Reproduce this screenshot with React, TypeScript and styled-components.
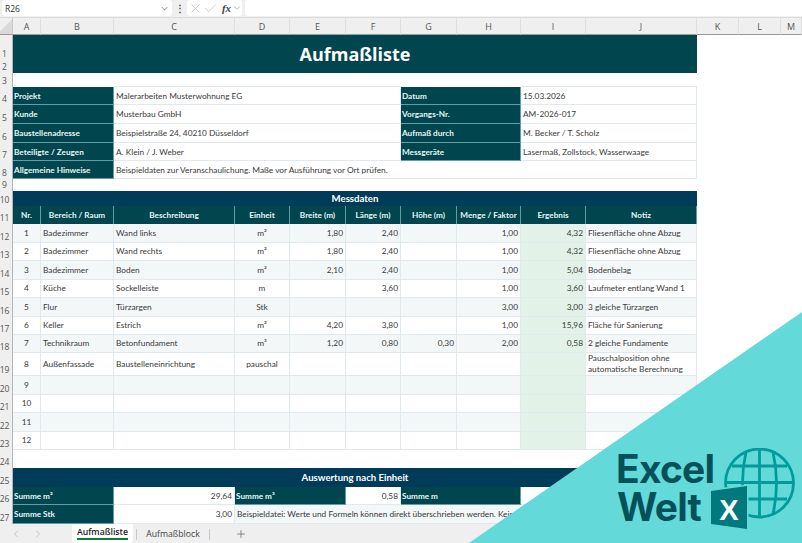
import styled, { createGlobalStyle } from 'styled-components';
import { ChevronDown, ChevronLeft, ChevronRight, Check, X, Plus } from 'lucide-react';

const GlobalStyle = createGlobalStyle`
    html, body {
        margin: 0;
        padding: 0;
        background: #fff;
    }
    body {
        font-family: "Open Sans", "Liberation Sans", sans-serif;
    }
`;

const COLUMN_LETTERS = ['A', 'B', 'C', 'D', 'E', 'F', 'G', 'H', 'I', 'J', 'K', 'L', 'M'];
const ROW_NUMBERS = Array.from({ length: 27 }, (_, i) => i + 1);

type PlaceProps = {
    $row: number;
    $col: number;
    $span?: number;
    $rows?: number;
};

// grid lines: line 1 is the row header column, column A starts on line 2
const place = (p: PlaceProps) => `
    grid-row: ${p.$row + 1} / span ${p.$rows || 1};
    grid-column: ${p.$col + 1} / span ${p.$span || 1};
`;

type MeasureRow = {
    nr: string;
    area?: string;
    desc?: string;
    unit?: string;
    w?: string;
    l?: string;
    h?: string;
    qty?: string;
    result?: string;
    note?: string;
};

const measures: MeasureRow[] = [
    { nr: '1', area: 'Badezimmer', desc: 'Wand links', unit: 'm²', w: '1,80', l: '2,40', qty: '1,00', result: '4,32', note: 'Fliesenfläche ohne Abzug' },
    { nr: '2', area: 'Badezimmer', desc: 'Wand rechts', unit: 'm²', w: '1,80', l: '2,40', qty: '1,00', result: '4,32', note: 'Fliesenfläche ohne Abzug' },
    { nr: '3', area: 'Badezimmer', desc: 'Boden', unit: 'm²', w: '2,10', l: '2,40', qty: '1,00', result: '5,04', note: 'Bodenbelag' },
    { nr: '4', area: 'Küche', desc: 'Sockelleiste', unit: 'm', l: '3,60', qty: '1,00', result: '3,60', note: 'Laufmeter entlang Wand 1' },
    { nr: '5', area: 'Flur', desc: 'Türzargen', unit: 'Stk', qty: '3,00', result: '3,00', note: '3 gleiche Türzargen' },
    { nr: '6', area: 'Keller', desc: 'Estrich', unit: 'm²', w: '4,20', l: '3,80', qty: '1,00', result: '15,96', note: 'Fläche für Sanierung' },
    { nr: '7', area: 'Technikraum', desc: 'Betonfundament', unit: 'm³', w: '1,20', l: '0,80', h: '0,30', qty: '2,00', result: '0,58', note: '2 gleiche Fundamente' },
    { nr: '8', area: 'Außenfassade', desc: 'Baustelleneinrichtung', unit: 'pauschal', note: 'Pauschalposition ohne automatische Berechnung' },
    { nr: '9' },
    { nr: '10' },
    { nr: '11' },
    { nr: '12' },
];

const headers = ['Nr.', 'Bereich / Raum', 'Beschreibung', 'Einheit', 'Breite (m)', 'Länge (m)', 'Höhe (m)', 'Menge / Faktor', 'Ergebnis', 'Notiz'];

const infoRows = [
    { row: 4, label: 'Projekt', value: 'Malerarbeiten Musterwohnung EG', label2: 'Datum', value2: '15.03.2026' },
    { row: 5, label: 'Kunde', value: 'Musterbau GmbH', label2: 'Vorgangs-Nr.', value2: 'AM-2026-017' },
    { row: 6, label: 'Baustellenadresse', value: 'Beispielstraße 24, 40210 Düsseldorf', label2: 'Aufmaß durch', value2: 'M. Becker / T. Scholz' },
    { row: 7, label: 'Beteiligte / Zeugen', value: 'A. Klein / J. Weber', label2: 'Messgeräte', value2: 'Lasermaß, Zollstock, Wasserwaage' },
];

function App() {
    return (
        <Page>
            <GlobalStyle />
            <FormulaBar>
                <NameBox>
                    R26
                    <ChevronDown size={11} strokeWidth={1.4} color="#555" />
                </NameBox>
                <Dots>⋮</Dots>
                <FxGroup>
                    <X size={15} strokeWidth={1} color="#b5b5b5" />
                    <Check size={15} strokeWidth={1} color="#b5b5b5" />
                    <FxLabel>fx</FxLabel>
                    <ChevronDown size={10} strokeWidth={1.2} color="#777" />
                </FxGroup>
                <FormulaInput />
            </FormulaBar>

            <Sheet>
                <Corner />
                {COLUMN_LETTERS.map((letter, i) => (
                    <ColHead key={letter} $col={i + 1}>{letter}</ColHead>
                ))}
                {ROW_NUMBERS.map((n) => (
                    <RowHead key={n} $row={n}>{n}</RowHead>
                ))}

                <Title $row={1} $rows={2} $col={1} $span={10}>Aufmaßliste</Title>

                {infoRows.map((r) => (
                    <InfoGroup key={r.row} {...r} />
                ))}
                <Label $row={8} $col={1} $span={2}>Allgemeine Hinweise</Label>
                <Value $row={8} $col={3} $span={8}>
                    Beispieldaten zur Veranschaulichung. Maße vor Ausführung vor Ort prüfen.
                </Value>

                <Band $row={10} $col={1} $span={10}>Messdaten</Band>
                {headers.map((h, i) => (
                    <Th key={h} $row={11} $col={i + 1}>{h}</Th>
                ))}
                {measures.map((m, i) => (
                    <MeasureLine key={m.nr} item={m} row={12 + i} />
                ))}

                <Band $row={25} $col={1} $span={10}>Auswertung nach Einheit</Band>
                <Label $row={26} $col={1} $span={2}>Summe m²</Label>
                <Value $row={26} $col={3} $right>29,64</Value>
                <Label $row={26} $col={4} $span={2}>Summe m³</Label>
                <Value $row={26} $col={6} $right>0,58</Value>
                <Label $row={26} $col={7} $span={2}>Summe m</Label>
                <Value $row={26} $col={9} $span={2} $right>3,60</Value>
                <Label $row={27} $col={1} $span={2}>Summe Stk</Label>
                <Value $row={27} $col={3} $right>3,00</Value>
                <Value $row={27} $col={4} $span={7} $tint>
                    Beispieldatei: Werte und Formeln können direkt überschrieben werden. Keine Gewähr.
                </Value>
            </Sheet>

            <TabBar>
                <TabNav>
                    <ChevronLeft size={12} strokeWidth={1.3} color="#a8a8a8" />
                    <ChevronRight size={12} strokeWidth={1.3} color="#a8a8a8" />
                </TabNav>
                <ActiveTab>
                    <ActiveTabText>Aufmaßliste</ActiveTabText>
                </ActiveTab>
                <Tab>Aufmaßblock</Tab>
                <Plus size={12} strokeWidth={1.4} color="#666" />
            </TabBar>

            <Wedge />
            <Logo>
                <LogoWord>Excel</LogoWord>
                <LogoWord $indent>Welt</LogoWord>
                <LogoMark viewBox="0 0 90 90" aria-hidden="true">
                    <g fill="none" stroke="#009b9b" strokeWidth="2.8">
                        <circle cx="48.5" cy="35" r="34" />
                        <path d="M35 4 Q28 35 35 66" />
                        <path d="M62 4 Q69 35 62 66" />
                        <line x1="48.5" y1="1" x2="48.5" y2="69" />
                        <line x1="21" y1="18" x2="76" y2="18" />
                        <line x1="14.5" y1="34.5" x2="82.5" y2="34.5" />
                        <line x1="21" y1="51" x2="76" y2="51" />
                    </g>
                    <path d="M0 43 L36 38 L36 81 L0 76 Z" fill="#00787c" stroke="#64d9da" strokeWidth="3" paintOrder="stroke" />
                    <LogoX x="18" y="71.5" textAnchor="middle">X</LogoX>
                </LogoMark>
            </Logo>
        </Page>
    );
}

export default App;

type InfoProps = {
    row: number;
    label: string;
    value: string;
    label2: string;
    value2: string;
};

function InfoGroup({ row, label, value, label2, value2 }: InfoProps) {
    const top = row === 4;
    return (
        <>
            <Label $row={row} $col={1} $span={2}>{label}</Label>
            <Value $row={row} $col={3} $span={4} $top={top}>{value}</Value>
            <Label $row={row} $col={7} $span={2}>{label2}</Label>
            <Value $row={row} $col={9} $span={2} $top={top}>{value2}</Value>
        </>
    );
}

type LineProps = {
    item: MeasureRow;
    row: number;
};

function MeasureLine({ item, row }: LineProps) {
    const alt = row % 2 === 0;
    return (
        <>
            <Td $row={row} $col={1} $alt={alt} $align="center">{item.nr}</Td>
            <Td $row={row} $col={2} $alt={alt}>{item.area}</Td>
            <Td $row={row} $col={3} $alt={alt}>{item.desc}</Td>
            <Td $row={row} $col={4} $alt={alt} $align="center">{item.unit}</Td>
            <Td $row={row} $col={5} $alt={alt} $align="right">{item.w}</Td>
            <Td $row={row} $col={6} $alt={alt} $align="right">{item.l}</Td>
            <Td $row={row} $col={7} $alt={alt} $align="right">{item.h}</Td>
            <Td $row={row} $col={8} $alt={alt} $align="right">{item.qty}</Td>
            <ResultTd $row={row} $col={9}>{item.result}</ResultTd>
            <Td $row={row} $col={10} $alt={alt}>{item.note}</Td>
        </>
    );
}

const Page = styled.div`
    position: relative;
    display: flex;
    flex-direction: column;
    width: 802px;
    height: 543px;
    overflow: hidden;
    background: #fff;
`;

const FormulaBar = styled.div`
    display: flex;
    align-items: center;
    gap: 3px;
    height: 18px;
    padding: 0 0 1px 2px;
    box-sizing: border-box;
    background: #efefef;
    border-bottom: 1px solid #dcdcdc;
`;

const NameBox = styled.div`
    display: flex;
    align-items: center;
    justify-content: space-between;
    width: 170px;
    height: 16px;
    padding: 0 2px 0 3px;
    box-sizing: border-box;
    background: #fff;
    border-radius: 3px;
    font-size: 8.5px;
    color: #333;
`;

const Dots = styled.div`
    width: 9px;
    text-align: center;
    font-size: 10px;
    font-weight: 700;
    color: #555;
`;

const FxGroup = styled.div`
    display: flex;
    align-items: center;
    width: 55px;
    height: 16px;
    padding-left: 1px;
    box-sizing: border-box;
    background: #fff;
    border-radius: 3px;
`;

const FxLabel = styled.span`
    margin: 0 1px 0 4px;
    font-family: "Liberation Serif", serif;
    font-style: italic;
    font-weight: 700;
    font-size: 11px;
    color: #444;
`;

const FormulaInput = styled.div`
    flex: 1;
    height: 16px;
    background: #fff;
    border-radius: 3px 0 0 3px;
`;

const Sheet = styled.div`
    display: grid;
    grid-template-columns: 13px 28px 73px 121px 55px 56px 55px 56px 64px 65px 111px 42px 42px 21px;
    grid-template-rows: 17px 25px 13px 14px 18px 19px 19px 18px 18px 12px 15px 18px 19px 18px 19px 18px 19px 18px 18px 23px 19px 18px 19px 18px 18px 19px 18px 19px;
    font-size: 8px;
    color: #3a3a3a;
`;

const Corner = styled.div`
    grid-row: 1;
    grid-column: 1;
    background: linear-gradient(135deg, #efefef 50%, #d9d9d9 50%);
    border-bottom: 1px solid #9a9a9a;
    border-right: 1px solid #c8c8c8;
    box-sizing: border-box;
`;

const ColHead = styled.div<{ $col: number }>`
    grid-row: 1;
    grid-column: ${(p) => p.$col + 1};
    display: flex;
    align-items: center;
    justify-content: center;
    background: #efefef;
    border-bottom: 1px solid #9a9a9a;
    border-right: 1px solid #dedede;
    box-sizing: border-box;
    font-size: 9px;
    color: #555;
`;

const RowHead = styled.div<{ $row: number }>`
    grid-row: ${(p) => p.$row + 1};
    grid-column: 1;
    display: flex;
    align-items: flex-end;
    justify-content: center;
    padding-right: 3px;
    background: #efefef;
    border-right: 1px solid #b5b5b5;
    box-sizing: border-box;
    font-size: 8.5px;
    line-height: 13px;
    color: #555;
`;

const Title = styled.div<PlaceProps>`
    ${place}
    display: flex;
    align-items: center;
    justify-content: center;
    background: #01464e;
    font-size: 18px;
    font-weight: 700;
    color: #fff;
`;

const Band = styled.div<PlaceProps>`
    ${place}
    display: flex;
    align-items: center;
    justify-content: center;
    background: #003c59;
    font-family: Lato, "Open Sans", sans-serif;
    font-size: 9.6px;
    font-weight: 700;
    color: #fff;
`;

const Label = styled.div<PlaceProps>`
    ${place}
    display: flex;
    align-items: center;
    padding-left: 1px;
    background: #01464e;
    border: 1px solid #5f9ea3;
    border-left: none;
    border-top: none;
    box-sizing: border-box;
    font-family: Lato, "Open Sans", sans-serif;
    font-size: 8.2px;
    font-weight: 700;
    color: #e6f5f5;
    white-space: nowrap;
    overflow: hidden;
`;

const Value = styled.div<PlaceProps & { $right?: boolean; $tint?: boolean; $top?: boolean }>`
    ${place}
    display: flex;
    align-items: center;
    justify-content: ${(p) => (p.$right ? 'flex-end' : 'flex-start')};
    padding: 0 2px;
    background: ${(p) => (p.$tint ? '#f3f7f8' : '#fff')};
    border-right: 1px solid #dfe9ee;
    border-bottom: 1px solid #dfe9ee;
    box-shadow: ${(p) => (p.$top ? '0 -1px 0 #dfe9ee' : 'none')};
    box-sizing: border-box;
    font-family: Lato, "Open Sans", sans-serif;
    font-size: 8.3px;
    white-space: nowrap;
    overflow: hidden;
`;

const Th = styled.div<PlaceProps>`
    ${place}
    display: flex;
    align-items: center;
    justify-content: center;
    background: #01464e;
    border-right: 1px solid #5f9ea3;
    box-sizing: border-box;
    font-family: Lato, "Open Sans", sans-serif;
    font-size: 8.2px;
    font-weight: 700;
    color: #e6f5f5;
    white-space: nowrap;
`;

const Td = styled.div<PlaceProps & { $alt?: boolean; $align?: 'center' | 'right' }>`
    ${place}
    display: flex;
    align-items: center;
    justify-content: ${(p) => (p.$align === 'center' ? 'center' : p.$align === 'right' ? 'flex-end' : 'flex-start')};
    padding: 0 2px;
    background: ${(p) => (p.$alt ? '#f3f7f8' : '#fff')};
    border-right: 1px solid #dfe9ee;
    border-bottom: 1px solid #dfe9ee;
    box-sizing: border-box;
    font-family: Lato, "Open Sans", sans-serif;
    font-size: 8.3px;
    line-height: 11px;
`;

const ResultTd = styled(Td)`
    justify-content: flex-end;
    background: #e2f2e8;
`;

const TabBar = styled.div`
    display: flex;
    align-items: center;
    height: 19px;
    background: #efefef;
    font-size: 8.7px;
    color: #444;
`;

const TabNav = styled.div`
    display: flex;
    align-items: center;
    gap: 10px;
    width: 72px;
    padding-left: 10px;
    box-sizing: border-box;
`;

const ActiveTab = styled.div`
    display: flex;
    justify-content: center;
    width: 61px;
    height: 19px;
    background: #fff;
    border-radius: 0 0 3px 3px;
`;

const ActiveTabText = styled.span`
    height: 16px;
    box-sizing: border-box;
    line-height: 16px;
    font-weight: 600;
    color: #1c1c1c;
    border-bottom: 2px solid #107c41;
`;

const Tab = styled.div`
    width: 72px;
    height: 11px;
    margin: 2px 25px 0 3px;
    line-height: 11px;
    text-align: center;
    border-left: 1px solid #c8c8c8;
    border-right: 1px solid #c8c8c8;
`;

const Wedge = styled.div`
    position: absolute;
    right: 0;
    bottom: 0;
    width: 333px;
    height: 231px;
    background: #64d9da;
    clip-path: polygon(100% 0, 100% 100%, 0 100%);
`;

const Logo = styled.div`
    position: absolute;
    left: 616px;
    top: 448px;
    width: 186px;
    height: 90px;
    padding-top: 2px;
    box-sizing: border-box;
    font-family: Inter, "Liberation Sans", sans-serif;
    font-size: 39px;
    font-weight: 700;
    line-height: 38px;
    letter-spacing: -0.8px;
    color: #04515a;
`;

const LogoWord = styled.div<{ $indent?: boolean }>`
    height: 38px;
    margin-left: ${(p) => (p.$indent ? '1px' : '0')};
`;

const LogoMark = styled.svg`
    position: absolute;
    left: 95px;
    top: 0;
    width: 90px;
    height: 90px;
`;

const LogoX = styled.text`
    font-family: "Liberation Sans", sans-serif;
    font-size: 29px;
    font-weight: 700;
    letter-spacing: 0;
    fill: #fff;
`;
